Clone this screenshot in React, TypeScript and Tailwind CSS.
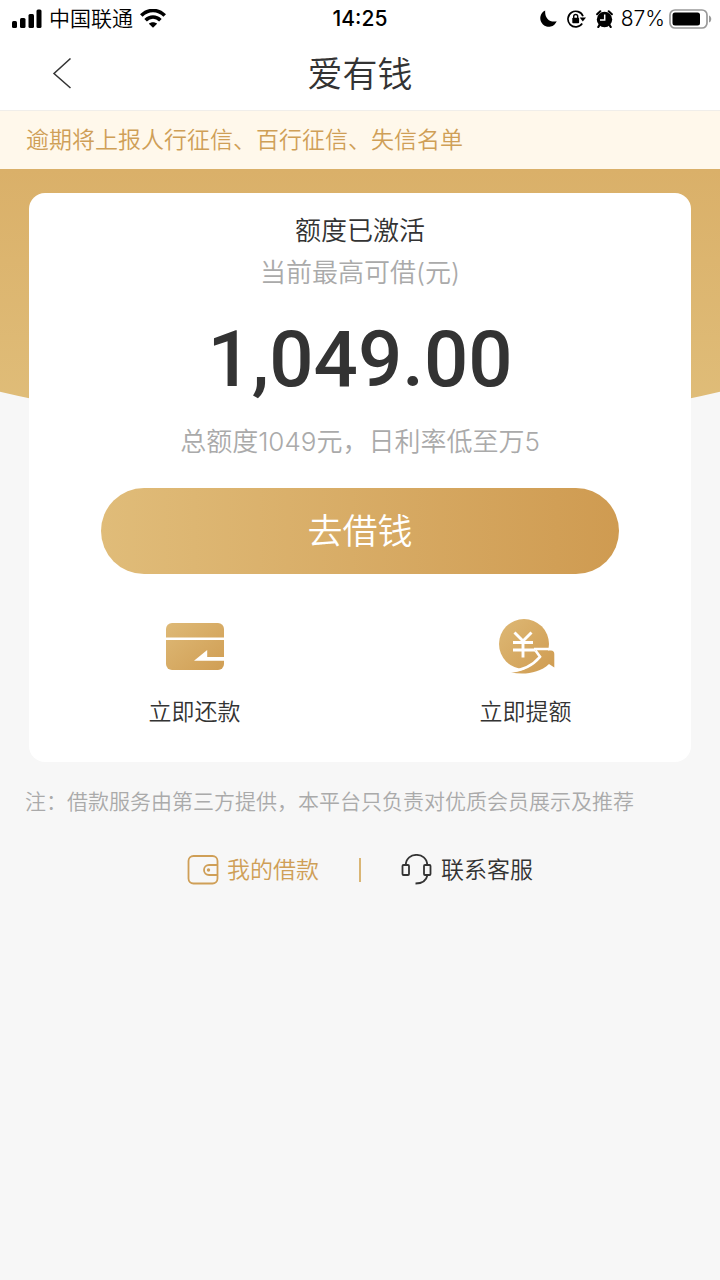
import React from 'react';

const StatusBar: React.FC = () => (
  <div className="grid grid-cols-3 items-center h-[37px] px-3 text-[21px] leading-9 text-black">
    <div className="flex items-center gap-[7px]">
      <svg className="w-[30px] h-[19px]" viewBox="0 0 30 19" aria-hidden="true">
        <rect x="0" y="12" width="5" height="7" rx="1.5" />
        <rect x="8" y="9" width="5.5" height="10" rx="1.5" />
        <rect x="16.5" y="5" width="5.5" height="14" rx="1.5" />
        <rect x="24.5" y="0.5" width="5" height="18.5" rx="1.5" />
      </svg>
      <span>中国联通</span>
      <svg className="w-[26px] h-[19px]" viewBox="0 0 26 19" aria-hidden="true">
        <g fill="none" stroke="#000" strokeWidth="3.6">
          <path d="M1.3 6.6C8-.2 18-.2 24.7 6.6" />
          <path d="M5.6 11.2C9.9 7 16.1 7 20.4 11.2" />
        </g>
        <path d="M13 18.7 8.9 14.7C11 12.7 15 12.7 17.1 14.7Z" />
      </svg>
    </div>
    <div className="text-center font-medium">14:25</div>
    <div className="flex items-center justify-end -mr-1">
      <svg className="w-[17px] h-[17px] mr-2.5" viewBox="0 0 17 17" aria-hidden="true">
        <path d="M5.200.5A8.500 8.500 0 1 0 16.700 11.300C9.500 12.800 4.500 8 5.200.5Z" />
      </svg>
      <svg className="w-[19px] h-[18px] mr-2.5" viewBox="0 0 19 18" aria-hidden="true">
        <path d="M16 6.200A7.800 7.800 0 1 0 15.200 13.500" fill="none" stroke="#000" strokeWidth="1.700" />
        <path d="M12.700 7.500H19L15.800 11.500Z" />
        <rect x="5.300" y="7.800" width="6.800" height="5.400" rx=".8" />
        <path d="M6.700 8V6.500a2 2 0 0 1 4 0V8" fill="none" stroke="#000" strokeWidth="1.400" />
      </svg>
      <svg className="w-[17px] h-[18px] mr-2" viewBox="0 0 17 18" aria-hidden="true">
        <circle cx="8.500" cy="9.500" r="7.700" />
        <path d="M3.800 14.500 2.300 17M13.200 14.500 14.700 17" stroke="#000" strokeWidth="2.200" strokeLinecap="round" />
        <path d="M1.100 4.300 4.300 1.200M15.900 4.300 12.700 1.200" stroke="#000" strokeWidth="2" strokeLinecap="round" />
        <path d="M8.700 4.500V10H4" fill="none" stroke="#fff" strokeWidth="1.500" />
      </svg>
      <span>87%</span>
      <svg className="w-[43px] h-[20px] ml-1" viewBox="0 0 43 20" aria-hidden="true">
        <rect x="1" y="1" width="37" height="18" rx="5" fill="none" stroke="#999" strokeWidth="1.700" />
        <rect x="3.500" y="3.500" width="27.500" height="13" rx="2.500" />
        <path d="M40 6.500c3 1 3 6 0 7Z" fill="#999" />
      </svg>
    </div>
  </div>
);

const CardIcon: React.FC = () => (
  <svg className="w-[60px] h-14" viewBox="0 0 60 56" aria-hidden="true">
    <defs>
      <linearGradient id="cardGold" x1="0" y1="0" x2="1" y2="1">
        <stop offset="0" stopColor="#deb976" />
        <stop offset="1" stopColor="#d09e54" />
      </linearGradient>
    </defs>
    <rect x="1" y="5" width="58" height="47" rx="6" fill="url(#cardGold)" />
    <path d="M0 20.700H60" stroke="#fff" strokeWidth="2.600" />
    <path d="M60 42.800H29L42.200 32V39H60Z" fill="#fff" />
  </svg>
);

const RaiseIcon: React.FC = () => (
  <svg className="w-[60px] h-14" viewBox="0 0 60 56" aria-hidden="true">
    <defs>
      <linearGradient id="raiseGold" x1="0" y1="0" x2="60" y2="56" gradientUnits="userSpaceOnUse">
        <stop offset="0" stopColor="#deb976" />
        <stop offset="1" stopColor="#cf9b50" />
      </linearGradient>
    </defs>
    <circle cx="28" cy="26" r="25" fill="url(#raiseGold)" />
    <path d="M15 54.500C28 53 38 48 44.500 38.500L40.500 32.500H55Q58.300 32.500 58.300 36V49.500L53 46C43 55.500 28 57 15 54.500Z" fill="url(#raiseGold)" />
    {/* white line that separates the arrow from the coin */}
    <path d="M38 31H53M39.500 32.500 44 38.800C37 47 27 52.500 14 53.200" fill="none" stroke="#fff" strokeWidth="2.600" />
    <path d="M18.500 14.500 27 23 35.500 14.500M17 24.500H37M17 32H39M27 23V39.500" fill="none" stroke="#fff" strokeWidth="2.900" />
  </svg>
);

const ACTIONS = [
  { name: '立即还款', icon: <CardIcon /> },
  { name: '立即提额', icon: <RaiseIcon /> },
];

const App: React.FC = () => {
  return (
    <div className="min-h-screen bg-[#f7f7f7] text-[#333] font-[350] font-['Inter','Noto_Sans_CJK_SC',sans-serif]">
      <div className="bg-white border-b border-[#f0eeea]">
        <StatusBar />
        <header className="grid grid-cols-[1fr_auto_1fr] items-center h-[73px] px-12">
          <button aria-label="返回" className="w-7 h-10 flex items-center justify-center">
            <svg className="w-5 h-8" viewBox="0 0 20 32" fill="none" stroke="#333" strokeWidth="1.500" aria-hidden="true">
              <path d="M18.500 .5 2 15.500 18.500 30" />
            </svg>
          </button>
          <h1 className="text-[35px] leading-[72px] font-[350]">爱有钱</h1>
        </header>
      </div>
      <p className="bg-[#fff8eb] text-[#cf9f57] text-[23px] leading-[58px] px-[26px]">逾期将上报人行征信、百行征信、失信名单</p>

      <main className="grid">
        <div className="col-start-1 row-start-1 h-[262px] bg-linear-to-b from-[#dab069] to-[#e0be7a] [clip-path:ellipse(95%_100%_at_50%_0)]" />
        <section className="z-10 col-start-1 row-start-1 mt-6 mx-[29px] pt-[17px] pb-8 bg-white rounded-2xl text-center">
          <h2 className="text-[26px] leading-[42px] font-[350]">额度已激活</h2>
          <p className="text-[26px] leading-[42px] text-[#aaa]">当前最高可借(元)</p>
          <div className="text-[78px] leading-[132px] font-medium font-['Roboto',sans-serif]">1,049.00</div>
          <p className="text-[26px] leading-8 text-[#aaa]">总额度1049元，日利率低至万5</p>
          <div className="px-[72px] pt-[30px]">
            <button className="w-full h-[86px] rounded-full bg-linear-to-r from-[#e0bc79] to-[#cf9b51] text-white text-[35px]">去借钱</button>
          </div>
          <div className="grid grid-cols-2 mt-11">
            {ACTIONS.map(a => (
              <button key={a.name} className="flex flex-col items-center gap-5">
                {a.icon}
                <span className="text-[23px] leading-9">{a.name}</span>
              </button>
            ))}
          </div>
        </section>
      </main>

      <p className="mt-[22px] px-[25px] text-[21px] leading-9 text-[#aaa]">注：借款服务由第三方提供，本平台只负责对优质会员展示及推荐</p>
      <nav className="mt-8 flex items-center justify-center gap-10 text-[23px] leading-9">
        <a href="#loans" className="flex items-center gap-2 text-[#cf9f57]">
          <svg className="w-8 h-8" viewBox="0 0 32 32" fill="none" stroke="#cf9f57" strokeWidth="1.800" aria-hidden="true">
            <rect x="1.500" y="2" width="29" height="27.500" rx="5" />
            <path d="M30.500 11H22a5 5 0 0 0 0 10H30.500" />
            <circle cx="21.500" cy="16" r="1.700" fill="#cf9f57" stroke="none" />
          </svg>
          我的借款
        </a>
        <span className="w-0.5 h-6 bg-[#dab675]" />
        <a href="#service" className="flex items-center gap-2">
          <svg className="w-8 h-8" viewBox="0 0 32 32" fill="none" stroke="#333" strokeWidth="1.800" aria-hidden="true">
            <rect x="1.500" y="11" width="6.500" height="10" rx="1" />
            <rect x="23" y="11" width="6.500" height="10" rx="1" />
            <path d="M4.800 11C5-2.500 26-2.500 26.200 11M26.500 21C25.500 26 22 29.500 14.500 29.500" />
          </svg>
          联系客服
        </a>
      </nav>
    </div>
  );
};

export default App;
